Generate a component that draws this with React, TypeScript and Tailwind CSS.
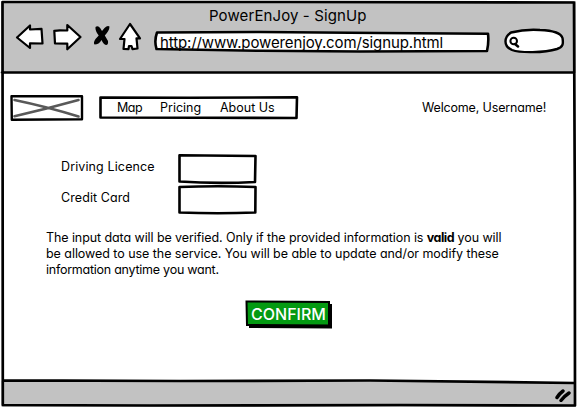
import type { ReactNode } from 'react';

const line = { fill: 'none', stroke: '#000', strokeLinejoin: 'round', strokeLinecap: 'round' } as const;

function SketchBox({ className, d, box, fill = '#fff', width = 2.6, children }: {
  className: string; d: string; box: string; fill?: string; width?: number; children?: ReactNode;
}) {
  return (
    <div className={`relative shrink-0 ${className}`}>
      <svg className="absolute inset-0 h-full w-full overflow-visible" viewBox={box}>
        <path d={d} {...line} fill={fill} strokeWidth={width} />
      </svg>
      <div className="relative flex h-full items-center">{children}</div>
    </div>
  );
}

function NavIcons() {
  return (
    <svg className="h-[30px] w-[128px] shrink-0" viewBox="15 22 128 30">
      <g {...line} fill="#fff" strokeWidth="2.2">
        <path d="M17 37.5 30 25.500V29.500L41.500 28.800 42.500 43.500 30 43.300V48Z" />
        <path d="M54.300 30.800 60 30.300 67.300 30.500V25L80.500 37 67.300 49.300V43.700L55 43.500Z" />
        <path d="M130 24 140 38.300H136.500L137.500 48.500 132.500 49.200 131.500 46H129L128.500 49.200 123.500 49 124.500 39H120Z" />
      </g>
      <path d="M95.500 27Q98 25 100.500 28.500L102 31 104.500 28Q107.500 25 109.500 26.500 109.500 30.500 104.800 35.500L108 41Q108.500 45 106 45 103.500 44.500 101.500 40 99 44.500 94.500 44.500 93 42.500 95.500 39L98.700 35.500Q95 31 95.500 27Z" fill="#000" />
    </svg>
  );
}

export default function App() {
  return (
    <div className="relative flex h-[408px] w-[577px] flex-col overflow-hidden bg-white font-['Inter','Lato',sans-serif] text-[12.500px] text-black [font-feature-settings:'cv11']">
      <header className="h-[73px] shrink-0 bg-[#c2c2c2] pl-[15px]">
        <h1 className="h-[22px] pt-[5px] pl-[194px] text-[15px] leading-[22px] tracking-[0.110px] whitespace-nowrap">PowerEnJoy - SignUp</h1>
        <div className="flex h-[40px] items-start">
          <NavIcons />
          <SketchBox className="mt-[9px] ml-[11px] h-[22px] w-[336px]" box="154 31 336 22" d="M157 32.500 260 32 380 33 488 33.700Q489 42 487 51L360 51.500 260 50.800 156.500 49Q154 41 157 32.500Z">
            <span className="pt-[2px] pl-[6px] text-[15px] leading-[18px] tracking-[-0.120px] whitespace-nowrap">http://www.powerenjoy.com/signup.html</span>
          </SketchBox>
          <SketchBox className="mt-[7px] ml-[14px] h-[26px] w-[61px]" box="504 29 61 26" width={2.4} d="M511 32.500Q525 29 540 30C553 30.500 561 33 562.500 38 563.500 44 563 47 557 49 544 53 520 53 512 50 503 46 504 37 511 32.500Z">
            <svg className="ml-[4px] h-[12px] w-[12px]" viewBox="508 36 12 12">
              <circle cx="513.700" cy="41" r="3.300" {...line} strokeWidth="2" />
              <path d="M515 44 518 46.500" {...line} strokeWidth="2.500" />
            </svg>
          </SketchBox>
        </div>
      </header>

      <main className="h-[308px] shrink-0 bg-white">
        <nav className="flex h-[72px] items-start pt-[22px] pl-[10px]">
          <SketchBox className="h-[26px] w-[74px]" box="10 95 74 26" width={2.4} d="M11.500 96.200 82 96.200V119.200L11.800 119.700Z">
            <svg className="h-[26px] w-[74px]" viewBox="10 95 74 26">
              <path d="M14.500 100Q48 107 78.500 116.500M78.500 100Q46 109 14.500 116.300" {...line} stroke="#595959" strokeWidth="2.600" />
            </svg>
          </SketchBox>
          <SketchBox className="ml-[14px] h-[25px] w-[201px]" box="98 95 201 25" d="M100.500 97.500 190 97.800 297 97.200 296.500 118 200 117.800 100.500 117.500Z">
            <span className="w-[62px] pt-[1px] pl-[19px] tracking-[-0.500px] whitespace-nowrap">Map</span>
            <span className="w-[60px] pt-[1px] whitespace-nowrap">Pricing</span>
            <span className="pt-[1px] whitespace-nowrap">About Us</span>
          </SketchBox>
          <span className="mt-[4px] ml-[123px] leading-[18px] tracking-[-0.160px] whitespace-nowrap">Welcome, Username!</span>
        </nav>

        <form className="flex flex-col pt-[9px] pl-[61px]">
          <label className="flex h-[31px] items-start">
            <span className="w-[116px] pt-[4px] leading-[18px] tracking-[0.120px] whitespace-nowrap">Driving Licence</span>
            <SketchBox className="h-[30px] w-[81px]" box="177 154 81 30" d="M179.500 155.300 255.500 156 255 182Q217 184 179.500 181.500Z" />
          </label>
          <label className="flex h-[31px] items-start">
            <span className="w-[116px] pt-[4px] leading-[18px] tracking-[0.080px] whitespace-nowrap">Credit Card</span>
            <SketchBox className="h-[30px] w-[81px]" box="177 185 81 30" d="M179.500 187Q218 185.500 255.500 187L255.300 212.500Q218 214 179.500 212.500Z" />
          </label>
        </form>

        <p className="mt-[14px] ml-[46px] flex flex-col text-[12.500px] leading-[16px] whitespace-nowrap">
          <span className="tracking-[-0.085px]">The input data will be verified. Only if the provided information is <b className="tracking-[-0.500px]">valid</b> you will</span>
          <span className="tracking-[-0.050px]">be allowed to use the service. You will be able to update and/or modify these</span>
          <span className="tracking-[-0.250px]">information anytime you want.</span>
        </p>

        <button className="relative mt-[22px] ml-[245px] block h-[30px] w-[88px]">
          <svg className="absolute inset-0 h-full w-full" viewBox="245 300 88 30">
            <path d="M249 304H332V328.500L249 328Z" fill="#000" />
            <path d="M246.500 301.500 329 302V325.500L247 325Z" fill="#049a12" stroke="#000" strokeWidth="2" />
          </svg>
          <span className="relative block pr-[1px] pb-[2px] text-[16px] leading-[26px] font-medium text-white">CONFIRM</span>
        </button>
      </main>

      <footer className="flex h-[27px] shrink-0 items-center justify-end bg-[#c2c2c2] pr-[5px]">
        <svg className="h-[14px] w-[18px]" viewBox="554 388 18 14">
          <path d="M557 397.500Q559.500 393.500 563 391M561 400.500Q564.500 396 569 393" {...line} strokeWidth="3.400" />
        </svg>
      </footer>

      <svg className="pointer-events-none absolute inset-0 h-full w-full" viewBox="0 0 577 408">
        <path d="M0 0H577V1H0ZM0 0H1.500V408H0ZM576 0H577V408H576ZM0 407H577V408H0Z" fill="#fff" />
        <path d="M2 380.500 350 380 577 383.500 574 374H2Z" fill="#fff" />
        <path d="M2.500 2 290 2 574 2.500 574.800 200 575 405.500 400 405 150 405.500 2.800 405Z M2 72.500 300 72.500 574 72.500M3 380.300 180 381 370 380.500 574 383" {...line} strokeWidth="2.700" />
      </svg>
    </div>
  );
}
